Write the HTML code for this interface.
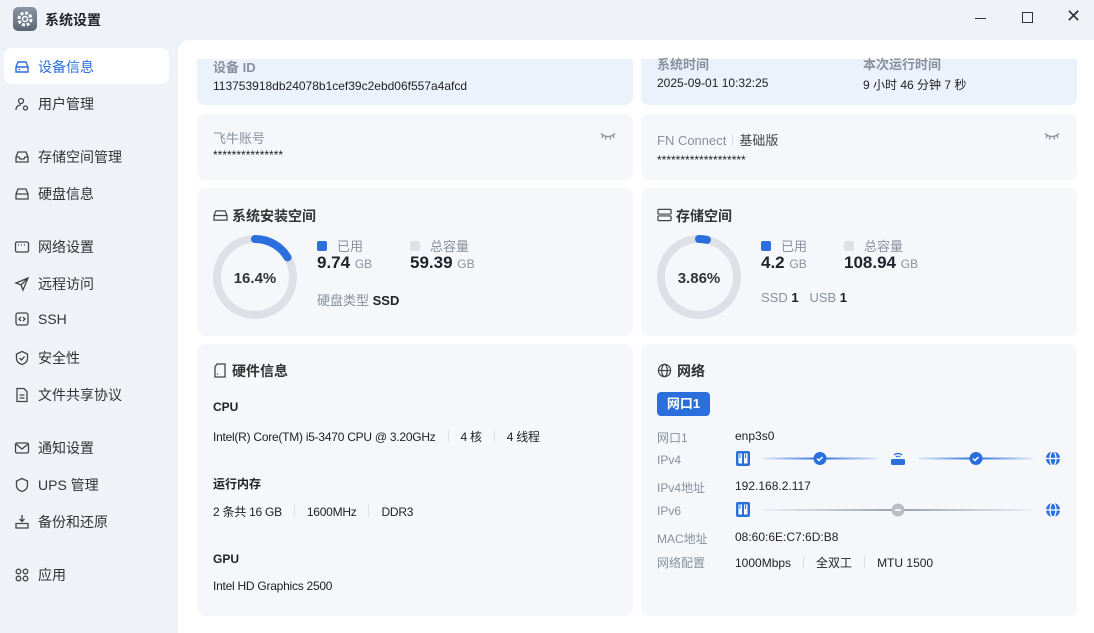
<!DOCTYPE html>
<html><head><meta charset="utf-8"><style>
*{margin:0;padding:0;box-sizing:border-box}
body{width:1094px;height:633px;overflow:hidden;background:#eff3f8;font-family:"Liberation Sans","Noto Sans CJK SC",sans-serif;color:#222;position:relative;font-size:12px}
.a{position:absolute;white-space:nowrap}
.nav{position:absolute;left:14px;font-size:14px;color:#333;display:flex;align-items:center;gap:8px}
.nav svg{width:16px;height:16px}
.main{position:absolute;left:178px;top:40px;width:916px;height:593px;background:#fff;border-radius:12px 0 0 0;overflow:hidden}
.card{position:absolute;background:#f5f7fb;border-radius:8px}
.lbl{color:#8a919e}
.h{font-size:14px;font-weight:bold;color:#333}
.sep{display:inline-block;width:1px;height:12px;background:#dde0e6;margin:0 12px;vertical-align:-1px}
.big{font-size:17px;font-weight:bold;color:#1f2329}
.gb{font-size:12px;color:#8a919e;font-weight:normal}
.cpu{letter-spacing:-0.25px}
</style></head><body>
<div class="a" style="left:13px;top:7px;width:24px;height:24px;border-radius:5px;background:linear-gradient(#8a94a3,#5c6575)"><svg width="24" height="24" viewBox="0 0 24 24"><circle cx="12" cy="12" r="6" fill="none" stroke="#fff" stroke-width="3" stroke-dasharray="3 1.7"/><circle cx="12" cy="12" r="2.5" fill="none" stroke="#fff" stroke-width="1.5"/></svg></div>
<div class="a" style="left:45px;top:10px;font-size:14px;font-weight:bold;color:#1f2329">系统设置</div>
<div class="a" style="left:975px;top:18px;width:11px;height:1px;background:#333"></div>
<div class="a" style="left:1022px;top:12px;width:11px;height:11px;border:1.3px solid #333"></div>
<div class="a" style="left:1066px;top:6px;font-size:18px;color:#333">✕</div>

<div class="a" style="left:4px;top:48px;width:165px;height:36px;background:#fff;border-radius:8px"></div>
<div class="nav" style="top:57px;color:#2a6fdb"><svg viewBox="0 0 16 16" fill="none" stroke="#2a6fdb" stroke-width="1.4"><path d="M2 8 L4 3 H12 L14 8 V13 H2 Z M2 8 H14"/><path d="M4.5 10.5h1.5"/></svg>设备信息</div>
<div class="nav" style="top:94px"><svg viewBox="0 0 16 16" fill="none" stroke="#444" stroke-width="1.3"><circle cx="7" cy="5" r="2.5"/><path d="M2 14c0-3 2-5 5-5"/><circle cx="11.5" cy="12" r="2"/></svg>用户管理</div>
<div class="nav" style="top:147px"><svg viewBox="0 0 16 16" fill="none" stroke="#444" stroke-width="1.3"><path d="M2 8 L4 3 H12 L14 8 V13 H2 Z M2 8 H5 L6 10 H10 L11 8 H14"/></svg>存储空间管理</div>
<div class="nav" style="top:184px"><svg viewBox="0 0 16 16" fill="none" stroke="#444" stroke-width="1.3"><path d="M2 8 L4 3 H12 L14 8 V13 H2 Z M2 8 H14"/></svg>硬盘信息</div>
<div class="nav" style="top:237px"><svg viewBox="0 0 16 16" fill="none" stroke="#444" stroke-width="1.3"><rect x="1.5" y="3" width="13" height="10" rx="1.5"/><path d="M4 6h1M7 6h1M10 6h1"/></svg>网络设置</div>
<div class="nav" style="top:274px"><svg viewBox="0 0 16 16" fill="none" stroke="#444" stroke-width="1.3"><path d="M14 2 L2 7 L7 9 L9 14 Z M7 9 L14 2"/></svg>远程访问</div>
<div class="nav" style="top:311px"><svg viewBox="0 0 16 16" fill="none" stroke="#444" stroke-width="1.3"><rect x="2" y="2" width="12" height="12" rx="2"/><path d="M7 6l-2 2 2 2M9 6l2 2-2 2"/></svg>SSH</div>
<div class="nav" style="top:348px"><svg viewBox="0 0 16 16" fill="none" stroke="#444" stroke-width="1.3"><path d="M8 1.5 L13.5 4 V8.5 C13.5 11.5 11 13.5 8 14.5 C5 13.5 2.5 11.5 2.5 8.5 V4 Z"/><path d="M5.5 8l2 2 3-3.5"/></svg>安全性</div>
<div class="nav" style="top:385px"><svg viewBox="0 0 16 16" fill="none" stroke="#444" stroke-width="1.3"><path d="M3 1.5h7l3 3v10H3z"/><path d="M5.5 8h5M5.5 11h5"/></svg>文件共享协议</div>
<div class="nav" style="top:438px"><svg viewBox="0 0 16 16" fill="none" stroke="#444" stroke-width="1.3"><rect x="1.5" y="3" width="13" height="10" rx="1.5"/><path d="M2 4l6 5 6-5"/></svg>通知设置</div>
<div class="nav" style="top:475px"><svg viewBox="0 0 16 16" fill="none" stroke="#444" stroke-width="1.3"><path d="M8 1.5 L13.5 4 V8.5 C13.5 11.5 11 13.5 8 14.5 C5 13.5 2.5 11.5 2.5 8.5 V4 Z"/></svg>UPS 管理</div>
<div class="nav" style="top:512px"><svg viewBox="0 0 16 16" fill="none" stroke="#444" stroke-width="1.3"><path d="M8 1v6M5.5 5l2.5 2.5 2.5-2.5M2 9.5v4.5h12V9.5z"/></svg>备份和还原</div>
<div class="nav" style="top:565px"><svg viewBox="0 0 16 16" fill="none" stroke="#444" stroke-width="1.3"><circle cx="4.5" cy="4.5" r="2.3"/><circle cx="11.5" cy="4.5" r="2.3"/><circle cx="4.5" cy="11.5" r="2.3"/><circle cx="11.5" cy="11.5" r="2.3"/></svg>应用</div>

<div class="main">
 <div class="card" style="left:19px;top:8px;width:436px;height:57px;background:#ebf2fc"></div>
 <div class="card" style="left:463px;top:8px;width:436px;height:57px;background:#ebf2fc"></div>
 <div class="a" style="left:0;top:0;width:916px;height:19px;background:#fff"></div>
 <div class="a lbl" style="left:35px;top:17px;font-size:13px;font-weight:bold">设备 ID</div>
 <div class="a" style="left:35px;top:39px">113753918db24078b1cef39c2ebd06f557a4afcd</div>
 <div class="a lbl" style="left:479px;top:14px;font-size:13px;font-weight:bold">系统时间</div>
 <div class="a" style="left:479px;top:36px">2025-09-01 10:32:25</div>
 <div class="a lbl" style="left:685px;top:14px;font-size:13px;font-weight:bold">本次运行时间</div>
 <div class="a" style="left:685px;top:36px">9 小时 46 分钟 7 秒</div>

 <div class="card" style="left:19px;top:74px;width:436px;height:66px"></div>
 <div class="a lbl" style="left:35px;top:88px;font-size:13px">飞牛账号</div>
 <div class="a" style="left:35px;top:108px">***************</div>
 <svg class="a" style="left:422px;top:92px" width="16" height="8" viewBox="0 0 16 8" fill="none" stroke="#8a919e" stroke-width="1.3"><path d="M1 1.5c4 4 10 4 14 0M3 3.5l-1 2.5M6 5l-.5 2.5M10 5l.5 2.5M13 3.5l1 2.5"/></svg>
 <div class="card" style="left:463px;top:74px;width:436px;height:66px"></div>
 <div class="a" style="left:479px;top:90px;font-size:13px"><span class="lbl">FN Connect</span><span class="sep" style="margin:0 6px"></span><span style="color:#444">基础版</span></div>
 <div class="a" style="left:479px;top:113px">*******************</div>
 <svg class="a" style="left:866px;top:92px" width="16" height="8" viewBox="0 0 16 8" fill="none" stroke="#8a919e" stroke-width="1.3"><path d="M1 1.5c4 4 10 4 14 0M3 3.5l-1 2.5M6 5l-.5 2.5M10 5l.5 2.5M13 3.5l1 2.5"/></svg>

 <div class="card" style="left:19px;top:148px;width:436px;height:148px"></div>
 <div class="a h" style="left:35px;top:166px"><svg width="15" height="13" viewBox="0 0 16 14" fill="none" stroke="#444" stroke-width="1.3" style="vertical-align:-1px;margin-right:4px"><path d="M1 7 L3 2 H13 L15 7 V12 H1 Z M1 7 H15"/></svg>系统安装空间</div>
 <svg class="a" style="left:35px;top:195px" width="84" height="84" viewBox="0 0 84 84"><circle cx="42" cy="42" r="38" fill="none" stroke="#dde0e6" stroke-width="8"/><circle cx="42" cy="42" r="38" fill="none" stroke="#2a6fdb" stroke-width="8" stroke-linecap="round" stroke-dasharray="39 300" transform="rotate(-90 42 42)"/></svg>
 <div class="a" style="left:35px;top:230px;width:84px;text-align:center;font-size:15px;font-weight:bold;color:#333">16.4%</div>
 <div class="a" style="left:139px;top:196px;font-size:13px"><span style="display:inline-block;width:10px;height:10px;background:#2a6fdb;border-radius:2px;margin-right:10px"></span><span class="lbl">已用</span></div>
 <div class="a big" style="left:139px;top:213px">9.74 <span class="gb">GB</span></div>
 <div class="a" style="left:232px;top:196px;font-size:13px"><span style="display:inline-block;width:10px;height:10px;background:#dde0e6;border-radius:2px;margin-right:10px"></span><span class="lbl">总容量</span></div>
 <div class="a big" style="left:232px;top:213px">59.39 <span class="gb">GB</span></div>
 <div class="a" style="left:139px;top:250px;font-size:13px"><span class="lbl">硬盘类型</span> <b>SSD</b></div>

 <div class="card" style="left:463px;top:148px;width:436px;height:148px"></div>
 <div class="a h" style="left:479px;top:166px"><svg width="15" height="14" viewBox="0 0 16 14" fill="none" stroke="#444" stroke-width="1.3" style="vertical-align:-1px;margin-right:4px"><rect x="1" y="1" width="14" height="5" rx="1"/><rect x="1" y="8" width="14" height="5" rx="1"/></svg>存储空间</div>
 <svg class="a" style="left:479px;top:195px" width="84" height="84" viewBox="0 0 84 84"><circle cx="42" cy="42" r="38" fill="none" stroke="#dde0e6" stroke-width="8"/><circle cx="42" cy="42" r="38" fill="none" stroke="#2a6fdb" stroke-width="8" stroke-linecap="round" stroke-dasharray="8 300" transform="rotate(-90 42 42)"/></svg>
 <div class="a" style="left:479px;top:230px;width:84px;text-align:center;font-size:15px;font-weight:bold;color:#333">3.86%</div>
 <div class="a" style="left:583px;top:196px;font-size:13px"><span style="display:inline-block;width:10px;height:10px;background:#2a6fdb;border-radius:2px;margin-right:10px"></span><span class="lbl">已用</span></div>
 <div class="a big" style="left:583px;top:213px">4.2 <span class="gb">GB</span></div>
 <div class="a" style="left:666px;top:196px;font-size:13px"><span style="display:inline-block;width:10px;height:10px;background:#dde0e6;border-radius:2px;margin-right:10px"></span><span class="lbl">总容量</span></div>
 <div class="a big" style="left:666px;top:213px">108.94 <span class="gb">GB</span></div>
 <div class="a" style="left:583px;top:250px;font-size:13px"><span class="lbl">SSD</span> <b>1</b> &nbsp;&nbsp;<span class="lbl">USB</span> <b>1</b></div>

 <div class="card" style="left:19px;top:304px;width:436px;height:272px"></div>
 <div class="a h" style="left:35px;top:321px"><svg width="14" height="15" viewBox="0 0 14 15" fill="none" stroke="#444" stroke-width="1.3" style="vertical-align:-2px;margin-right:5px"><path d="M4 1h8v13H2V4z"/><path d="M4 11h1"/></svg>硬件信息</div>
 <div class="a" style="left:35px;top:360px;font-weight:bold">CPU</div>
 <div class="a cpu" style="left:35px;top:388px">Intel(R) Core(TM) i5-3470 CPU @ 3.20GHz<span class="sep"></span>4 核<span class="sep"></span>4 线程</div>
 <div class="a" style="left:35px;top:435px;font-weight:bold">运行内存</div>
 <div class="a cpu" style="left:35px;top:463px">2 条共 16 GB<span class="sep"></span>1600MHz<span class="sep"></span>DDR3</div>
 <div class="a" style="left:35px;top:512px;font-weight:bold">GPU</div>
 <div class="a cpu" style="left:35px;top:539px">Intel HD Graphics 2500</div>

 <div class="card" style="left:463px;top:304px;width:436px;height:272px"></div>
 <div class="a h" style="left:479px;top:321px"><svg width="15" height="15" viewBox="0 0 16 16" fill="none" stroke="#444" stroke-width="1.3" style="vertical-align:-2px;margin-right:5px"><circle cx="8" cy="8" r="6.5"/><ellipse cx="8" cy="8" rx="3" ry="6.5"/><path d="M1.5 8h13"/></svg>网络</div>
 <div class="a" style="left:479px;top:352px;width:53px;height:24px;background:#2a6fdb;border-radius:4px;color:#fff;font-weight:bold;font-size:13px;text-align:center;line-height:24px">网口1</div>
 <div class="a lbl" style="left:479px;top:389px">网口1</div><div class="a" style="left:557px;top:389px">enp3s0</div>
 <div class="a lbl" style="left:479px;top:413px">IPv4</div>
 <div class="a lbl" style="left:479px;top:439px">IPv4地址</div><div class="a" style="left:557px;top:439px">192.168.2.117</div>
 <div class="a lbl" style="left:479px;top:464px">IPv6</div>
 <div class="a lbl" style="left:479px;top:490px">MAC地址</div><div class="a" style="left:557px;top:490px">08:60:6E:C7:6D:B8</div>
 <div class="a lbl" style="left:479px;top:514px">网络配置</div><div class="a" style="left:557px;top:514px">1000Mbps<span class="sep"></span>全双工<span class="sep"></span>MTU 1500</div>
 <svg class="a" style="left:555px;top:408px" width="340" height="70" viewBox="0 0 340 70">
  <defs><linearGradient id="g1"><stop offset="0" stop-color="#2a6fdb" stop-opacity="0.1"/><stop offset="0.5" stop-color="#2a6fdb"/><stop offset="1" stop-color="#2a6fdb" stop-opacity="0.1"/></linearGradient>
  <linearGradient id="g2"><stop offset="0" stop-color="#9aa1ad" stop-opacity="0.1"/><stop offset="0.5" stop-color="#9aa1ad"/><stop offset="1" stop-color="#9aa1ad" stop-opacity="0.1"/></linearGradient></defs>
  <rect x="3" y="3" width="14" height="15" rx="2" fill="#2a6fdb"/><rect x="5.5" y="5.5" width="3.5" height="10" fill="#fff"/><rect x="11" y="5.5" width="3.5" height="10" fill="#fff"/><path d="M7 6v4M12.5 6v4" stroke="#2a6fdb" stroke-width="1"/>
  <rect x="30" y="9.5" width="115" height="2" fill="url(#g1)"/><rect x="185" y="9.5" width="115" height="2" fill="url(#g1)"/>
  <circle cx="87" cy="10.5" r="6.5" fill="#2a6fdb"/><path d="M84 10.5l2 2 3.5-3.5" stroke="#fff" stroke-width="1.5" fill="none"/>
  <circle cx="243" cy="10.5" r="6.5" fill="#2a6fdb"/><path d="M240 10.5l2 2 3.5-3.5" stroke="#fff" stroke-width="1.5" fill="none"/>
  <rect x="158" y="11" width="14" height="6" rx="1.5" fill="#2a6fdb"/><path d="M161 7a6 6 0 0 1 8 0M163 9a3 3 0 0 1 4 0" stroke="#2a6fdb" stroke-width="1.3" fill="none"/>
  <circle cx="320" cy="10.5" r="7" fill="#2a6fdb"/><path d="M313 10.5h14" stroke="#fff" stroke-width="1.3"/><ellipse cx="320" cy="10.5" rx="3" ry="7" fill="none" stroke="#fff" stroke-width="1.3"/>
  <rect x="3" y="54" width="14" height="15" rx="2" fill="#2a6fdb"/><rect x="5.5" y="56.5" width="3.5" height="10" fill="#fff"/><rect x="11" y="56.5" width="3.5" height="10" fill="#fff"/><path d="M7 57v4M12.5 57v4" stroke="#2a6fdb" stroke-width="1"/>
  <rect x="30" y="61" width="270" height="2" fill="url(#g2)"/>
  <circle cx="165" cy="62" r="6.5" fill="#b8bec8"/><path d="M162 62h6" stroke="#fff" stroke-width="1.6"/>
  <circle cx="320" cy="62" r="7" fill="#2a6fdb"/><path d="M313 62h14" stroke="#fff" stroke-width="1.3"/><ellipse cx="320" cy="62" rx="3" ry="7" fill="none" stroke="#fff" stroke-width="1.3"/>
 </svg>
</div>
</body></html>
